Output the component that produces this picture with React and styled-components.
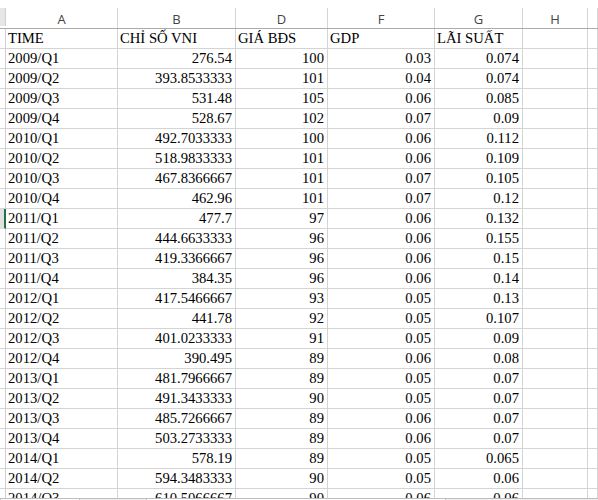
import React from "react";
import styled, { createGlobalStyle } from "styled-components";

const GlobalStyle = createGlobalStyle`
  html, body {
    margin: 0;
    padding: 0;
    background: #ffffff;
  }
  * {
    box-sizing: border-box;
  }
`;

const columns = [
  { key: "A", width: 112, align: "left" },
  { key: "B", width: 118, align: "right" },
  { key: "D", width: 92, align: "right" },
  { key: "F", width: 107, align: "right" },
  { key: "G", width: 88, align: "right" },
  { key: "H", width: 65, align: "right" },
];

const headerRow = ["TIME", "CHỈ SỐ VNI", "GIÁ BĐS", "GDP", "LÃI SUẤT", ""];

const data = [
  ["2009/Q1", "276.54", "100", "0.03", "0.074"],
  ["2009/Q2", "393.8533333", "101", "0.04", "0.074"],
  ["2009/Q3", "531.48", "105", "0.06", "0.085"],
  ["2009/Q4", "528.67", "102", "0.07", "0.09"],
  ["2010/Q1", "492.7033333", "100", "0.06", "0.112"],
  ["2010/Q2", "518.9833333", "101", "0.06", "0.109"],
  ["2010/Q3", "467.8366667", "101", "0.07", "0.105"],
  ["2010/Q4", "462.96", "101", "0.07", "0.12"],
  ["2011/Q1", "477.7", "97", "0.06", "0.132"],
  ["2011/Q2", "444.6633333", "96", "0.06", "0.155"],
  ["2011/Q3", "419.3366667", "96", "0.06", "0.15"],
  ["2011/Q4", "384.35", "96", "0.06", "0.14"],
  ["2012/Q1", "417.5466667", "93", "0.05", "0.13"],
  ["2012/Q2", "441.78", "92", "0.05", "0.107"],
  ["2012/Q3", "401.0233333", "91", "0.05", "0.09"],
  ["2012/Q4", "390.495", "89", "0.06", "0.08"],
  ["2013/Q1", "481.7966667", "89", "0.05", "0.07"],
  ["2013/Q2", "491.3433333", "90", "0.05", "0.07"],
  ["2013/Q3", "485.7266667", "89", "0.06", "0.07"],
  ["2013/Q4", "503.2733333", "89", "0.06", "0.07"],
  ["2014/Q1", "578.19", "89", "0.05", "0.065"],
  ["2014/Q2", "594.3483333", "90", "0.05", "0.06"],
  ["2014/Q3", "610.5066667", "90", "0.06", "0.06"],
];

const ACTIVE_ROW = 8;

export default function App() {
  return (
    <>
      <GlobalStyle />
      <Page>
        <TopGap />
        <Sheet>
          <HeaderRow>
            <Corner />
            {columns.map((c) => (
              <ColHeader key={c.key} $w={c.width}>{c.key}</ColHeader>
            ))}
            <ColHeader $fill />
          </HeaderRow>

          <Row>
            <RowHeader />
            {headerRow.map((text, i) => (
              <Cell key={i} $w={columns[i].width} $align="left">{text}</Cell>
            ))}
            <Cell $fill />
          </Row>

          {data.map((row, r) => (
            <Row key={row[0]}>
              <RowHeader $active={r === ACTIVE_ROW} />
              {columns.map((c, i) => (
                <Cell key={c.key} $w={c.width} $align={c.align}>
                  {row[i] || ""}
                </Cell>
              ))}
              <Cell $fill />
            </Row>
          ))}
        </Sheet>
        <BottomBar>
          <Tab $w={80} />
          <Gap />
          <Tab $w={300} />
        </BottomBar>
      </Page>
    </>
  );
}

const Page = styled.div`
  width: 598px;
  height: 500px;
  display: flex;
  flex-direction: column;
  overflow: hidden;
  background: #ffffff;
`;

const TopGap = styled.div`
  height: 8px;
  flex: none;
`;

const Sheet = styled.div`
  flex: 1;
  overflow: hidden;
  display: flex;
  flex-direction: column;
`;

const HeaderRow = styled.div`
  display: flex;
  height: 21px;
  flex: none;
  border-bottom: 1px solid #ababab;
`;

const Corner = styled.div`
  width: 6px;
  flex: none;
  height: 18px;
  background: #e6e6e6;
  border-right: 1px solid #d0d0d0;
`;

const ColHeader = styled.div`
  width: ${(p) => (p.$fill ? "auto" : `${p.$w}px`)};
  flex: ${(p) => (p.$fill ? "1" : "none")};
  border-right: 1px solid #d5d5d5;
  display: flex;
  align-items: center;
  justify-content: center;
  font-family: "Open Sans", "Noto Sans", sans-serif;
  font-size: 13px;
  color: #444444;
  padding-top: 1px;
`;

const Row = styled.div`
  display: flex;
  height: 20px;
  flex: none;
`;

const RowHeader = styled.div`
  width: 6px;
  flex: none;
  background: ${(p) => (p.$active ? "#e1e1e1" : "#ffffff")};
  border-right: ${(p) => (p.$active ? "2px solid #217346" : "1px solid #d0d0d0")};
  border-bottom: 1px solid ${(p) => (p.$active ? "#e1e1e1" : "#d4d4d4")};
`;

const Cell = styled.div`
  width: ${(p) => (p.$fill ? "auto" : `${p.$w}px`)};
  flex: ${(p) => (p.$fill ? "1" : "none")};
  border-right: 1px solid #d4d4d4;
  border-bottom: 1px solid #d4d4d4;
  font-family: "Liberation Serif", "Times New Roman", serif;
  font-size: 14.67px;
  line-height: 19px;
  color: #000000;
  text-align: ${(p) => p.$align || "left"};
  padding: 0 3px 0 2px;
  white-space: nowrap;
  overflow: hidden;
`;

const BottomBar = styled.div`
  height: 2px;
  flex: none;
  display: flex;
  border-top: 1px solid #bdbdbd;
  background: #f0f0f0;
`;

const Tab = styled.div`
  width: ${(p) => p.$w}px;
  flex: none;
  background: #ffffff;
  border-left: 1px solid #c6c6c6;
  border-right: 1px solid #c6c6c6;
`;

const Gap = styled.div`
  width: 66px;
  flex: none;
`;
